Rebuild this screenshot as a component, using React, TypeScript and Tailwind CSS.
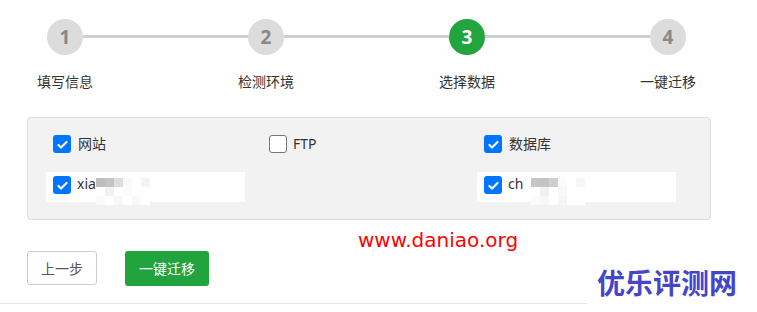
import React from "react";

const steps = [
  { n: 1, label: "填写信息" },
  { n: 2, label: "检测环境" },
  { n: 3, label: "选择数据" },
  { n: 4, label: "一键迁移" },
];

const font = { fontFamily: '"Noto Sans", "Noto Sans CJK SC", sans-serif' };

function Check({ checked }: { checked: boolean }) {
  if (!checked) {
    return (
      <span className="w-[18px] h-[18px] shrink-0 rounded-[3px] border border-[#767676] bg-white" />
    );
  }
  return (
    <span className="w-[18px] h-[18px] shrink-0 rounded-[3px] bg-[#0075ff] flex items-center justify-center">
      <svg viewBox="0 0 16 16" className="w-[13px] h-[13px]">
        <path d="M3 8.5l3.2 3.2L13 4.8" fill="none" stroke="#fff" strokeWidth="2.6" strokeLinecap="round" strokeLinejoin="round" />
      </svg>
    </span>
  );
}

function Blur({ blocks }: { blocks: string[][] }) {
  // mosaic that stands in for the hidden part of the name
  return (
    <span className="flex flex-col">
      {blocks.map((row, i) => (
        <span key={i} className="flex">
          {row.map((c, j) => (
            <span key={j} className="w-[9px] h-[9px]" style={{ background: c }} />
          ))}
        </span>
      ))}
    </span>
  );
}

export default function App() {
  return (
    <div className="relative w-[757px] h-[312px] bg-white overflow-hidden text-[#333]" style={font}>
      {/* stepper */}
      <div className="flex pl-[47px] pt-[19px]">
        {steps.map((s, i) => (
          <React.Fragment key={s.n}>
            <div className="flex flex-col items-center w-[36px] shrink-0">
              <div
                className={`w-[36px] h-[36px] rounded-full flex items-center justify-center text-[19px] font-bold ${
                  s.n === 3 ? "bg-[#22a43e] text-white" : "bg-[#dcdcdc] text-[#888]"
                }`}
              >
                {s.n}
              </div>
              <div className="mt-[17px] whitespace-nowrap text-[14px] leading-[20px] text-[#333]">{s.label}</div>
            </div>
            {i < steps.length - 1 && (
              <div className="w-[165px] h-[3px] mt-[16px] bg-[#cfcfcf] shrink-0" />
            )}
          </React.Fragment>
        ))}
      </div>

      {/* data panel */}
      <div className="ml-[27px] mt-[25px] w-[684px] h-[103px] bg-[#f2f2f2] border border-[#dddddd] rounded-[4px] pl-[18px] pt-[17px]">
        <div className="flex text-[14px] leading-[18px]">
          <label className="w-[216px] pl-[7px] flex items-center gap-[7px]">
            <Check checked />
            <span>网站</span>
          </label>
          <label className="w-[215px] pl-[7px] flex items-center gap-[6px]">
            <Check checked={false} />
            <span>FTP</span>
          </label>
          <label className="w-[216px] pl-[7px] flex items-center gap-[7px]">
            <Check checked />
            <span>数据库</span>
          </label>
        </div>
        <div className="flex mt-[19px] text-[14px]">
          <div className="w-[199px] h-[30px] bg-white pl-[7px] flex items-start pt-[4px] gap-[6px]">
            <Check checked />
            <span className="leading-[18px] -mt-[1px]">xia</span>
            <span className="-ml-[6px] mt-[2px]">
              <Blur
                blocks={[
                  ["#bdbdbd", "#c4c4c4", "#dedede", "#fafafa", "#ffffff", "#f4f4f4"],
                  ["#ffffff", "#f2f2f2", "#ffffff", "#fbfbfb", "#ffffff", "#ffffff"],
                  ["#fafafa", "#ffffff", "#f7f7f7", "#ffffff", "#f9f9f9", "#ffffff"],
                ]}
              />
            </span>
          </div>
          <div className="w-[232px]" />
          <div className="w-[199px] h-[30px] bg-white pl-[7px] flex items-start pt-[4px] gap-[6px]">
            <Check checked />
            <span className="leading-[18px] -mt-[1px]">ch</span>
            <span className="ml-[2px] mt-[2px]">
              <Blur
                blocks={[
                  ["#c6c6c6", "#c4c4c4", "#cfcfcf", "#fbfbfb", "#ffffff", "#f6f6f6"],
                  ["#ffffff", "#f0f0f0", "#ffffff", "#f8f8f8", "#ffffff", "#ffffff"],
                  ["#fbfbfb", "#f7f7f7", "#ffffff", "#f5f5f5", "#ffffff", "#ffffff"],
                ]}
              />
            </span>
          </div>
        </div>
      </div>

      {/* actions */}
      <div className="flex ml-[27px] mt-[31px] gap-[28px] items-start">
        <button className="w-[70px] h-[34px] border border-[#cccccc] rounded-[3px] bg-white text-[14px] text-[#555]">
          上一步
        </button>
        <button className="w-[84px] h-[35px] rounded-[3px] bg-[#21a43d] text-[14px] text-white">
          一键迁移
        </button>
      </div>
      <div className="mt-[17px] h-px bg-[#e6e6e6]" />

      {/* watermarks */}
      <div
        className="absolute left-[358px] top-[228px] text-[20px] leading-[24px] text-[#ff0000]"
        style={{ fontFamily: '"DejaVu Sans", sans-serif' }}
      >
        www.daniao.org
      </div>
      <div
        className="absolute left-[587px] top-[264px] w-[170px] h-[48px] bg-white pl-[10px] text-[28px] leading-[36px] font-bold text-[#4545c9]"
        style={{ fontFamily: '"Noto Sans CJK SC", sans-serif' }}
      >
        优乐评测网
      </div>
    </div>
  );
}
